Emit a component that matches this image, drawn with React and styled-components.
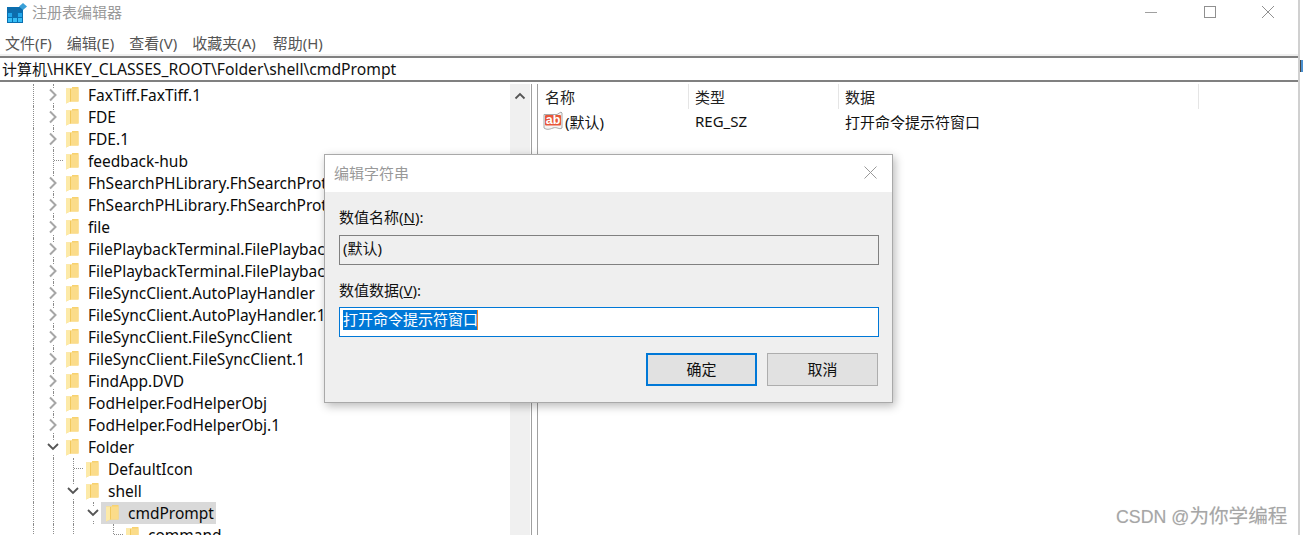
import React from "react";
import styled, { createGlobalStyle } from "styled-components";

const GlobalStyle = createGlobalStyle`
    html, body {
        margin: 0;
        padding: 0;
        background: #fff;
    }
    * {
        box-sizing: border-box;
    }
`;

const FONT = `"Noto Sans", "Noto Sans CJK SC", sans-serif`;

const Page = styled.div`
    position: relative;
    width: 1303px;
    height: 535px;
    overflow: hidden;
    background: #fff;
    display: flex;
    flex-direction: column;
    font-family: ${FONT};
    font-size: 15px;
    color: #000;
`;

const TitleBar = styled.div`
    height: 33px;
    flex: none;
    display: flex;
    align-items: flex-start;
    padding: 3px 0 0 7px;
    gap: 5px;
    color: #999;
`;

const AppName = styled.span`
    line-height: 20px;
    margin-top: -1px;
`;

const WindowButtons = styled.div`
    margin-left: auto;
    width: 157px;
    display: flex;
    justify-content: space-between;
    margin-right: 15px;
    margin-top: 2px;
`;

const MenuBar = styled.div`
    height: 21px;
    flex: none;
    display: flex;
    gap: 15px;
    padding-left: 5px;
    color: #555;
    font-size: 15px;
    line-height: 21px;
`;

const MenuItem = styled.span`
    margin-right: ${(p) => p.$extra || 0}px;
`;

const Strip = styled.div`
    height: 2px;
    flex: none;
    width: 1298px;
    background: #f0f0f0;
`;

const AddressBar = styled.div`
    height: 26px;
    width: 1298px;
    flex: none;
    border-top: 2px solid #808080;
    border-bottom: 2px solid #808080;
    padding-left: 2px;
    line-height: 22px;
    white-space: nowrap;
    color: #111;
    font-size: 15.7px;
`;

const AddressRoot = styled.span`
    font-size: 15px;
`;

const Body = styled.div`
    flex: 1;
    min-height: 0;
    width: 1298px;
    margin-top: 2px;
    display: flex;
`;

const Tree = styled.div`
    width: 510px;
    flex: none;
    overflow: hidden;
    padding-left: 23px;
`;

const Row = styled.div`
    height: 22px;
    display: flex;
    white-space: nowrap;
    color: #0a0a0a;
    font-size: 15.5px;
`;

const Indent = styled.div`
    position: relative;
    width: 20px;
    flex: none;
    ${(p) => p.$line && `
        &::before {
            content: "";
            position: absolute;
            left: 10px;
            top: 0;
            bottom: 0;
            border-left: 1px dotted #8c8c8c;
        }
    `}
    ${(p) => p.$stub && `
        &::after {
            content: "";
            position: absolute;
            left: 11px;
            right: 0;
            top: 10px;
            border-top: 1px dotted #8c8c8c;
        }
    `}
`;

const Toggle = styled.div`
    position: relative;
    width: 20px;
    flex: none;
    display: flex;
    align-items: center;
    justify-content: center;
    &::before {
        content: "";
        position: absolute;
        left: 10px;
        top: 0;
        bottom: 0;
        border-left: 1px dotted #8c8c8c;
    }
    svg {
        position: relative;
        background: #fff;
    }
`;

const Item = styled.div`
    display: flex;
    align-items: center;
    gap: 9px;
    height: 22px;
    margin-left: -2px;
    padding: 0 2px 0 5px;
    background: ${(p) => (p.$selected ? "#d9d9d9" : "transparent")};
    position: relative;
`;

const Label = styled.span`
    line-height: 22px;
`;

const Scrollbar = styled.div`
    width: 20px;
    flex: none;
    background: #f0f0f0;
    display: flex;
    justify-content: center;
    padding-top: 8px;
`;

const Divider = styled.div`
    width: 7px;
    flex: none;
    border-left: 1px solid #a0a0a0;
    border-right: 1px solid #a0a0a0;
    margin-left: 1px;
`;

const List = styled.div`
    flex: 1;
    min-width: 0;
`;

const ListHeader = styled.div`
    height: 25px;
    display: flex;
    color: #222;
`;

const HeaderCell = styled.div`
    width: ${(p) => p.$width}px;
    flex: none;
    padding-left: ${(p) => p.$pad}px;
    border-right: 1px solid #e5e5e5;
    line-height: 26px;
`;

const ListRow = styled.div`
    display: flex;
    height: 26px;
    padding-bottom: 2px;
    align-items: center;
    color: #111;
`;

const NameCell = styled.div`
    width: 151px;
    flex: none;
    display: flex;
    align-items: center;
    gap: 2px;
    padding-left: 5px;
`;

const TextCell = styled.div`
    width: 150px;
    flex: none;
    padding-left: 6px;
`;

const RightEdge = styled.div`
    position: absolute;
    left: 1298px;
    top: 0;
    bottom: 0;
    width: 2px;
    background: #d0d0d0;
`;

const EdgeMark = styled.div`
    position: absolute;
    left: 1300px;
    top: 60px;
    width: 3px;
    height: 12px;
    background: #4a90d0;
    border-left: 1px solid #444;
`;

const Dialog = styled.div`
    position: absolute;
    left: 324px;
    top: 154px;
    width: 569px;
    height: 249px;
    border: 1px solid #a9a9a9;
    background: #efefef;
    box-shadow: 2px 3px 9px rgba(0, 0, 0, 0.28);
    display: flex;
    flex-direction: column;
    color: #111;
`;

const DialogTitle = styled.div`
    height: 37px;
    flex: none;
    background: #fff;
    display: flex;
    align-items: center;
    justify-content: space-between;
    padding: 0 15px 2px 9px;
    color: #999;
`;

const DialogBody = styled.div`
    flex: 1;
    padding: 14px 13px 0 14px;
    display: flex;
    flex-direction: column;
`;

const FieldLabel = styled.div`
    height: ${(p) => (p.$compact ? 28 : 29)}px;
    line-height: 23px;
`;

const ReadOnlyField = styled.div`
    height: 30px;
    flex: none;
    border: 1px solid #808080;
    padding-left: 3px;
    line-height: 24px;
    margin-bottom: 14px;
`;

const EditField = styled.div`
    height: 30px;
    flex: none;
    border: 1px solid #0078d7;
    background: #fff;
    padding: 2px 0 0 3px;
    display: flex;
    align-items: flex-start;
`;

const Selection = styled.span`
    background: #0078d7;
    color: #fff;
    line-height: 19px;
    height: 20px;
    border-right: 1px solid #f08020;
    width: 135px;
    white-space: nowrap;
`;

const Buttons = styled.div`
    margin-top: 16px;
    display: flex;
    justify-content: flex-end;
    gap: 10px;
    padding-right: 1px;
`;

const Button = styled.div`
    width: 111px;
    height: 33px;
    background: #e1e1e1;
    border: ${(p) => (p.$primary ? "2px solid #0078d7" : "1px solid #adadad")};
    display: flex;
    align-items: center;
    justify-content: center;
    padding-bottom: 2px;
`;

const Watermark = styled.div`
    position: absolute;
    left: 1116px;
    top: 503px;
    font-family: "Liberation Sans", "Noto Sans CJK SC", sans-serif;
    font-size: 19.6px;
    line-height: 26px;
    color: #a6a6a6;
    white-space: nowrap;
    text-shadow: 0 0 1px rgba(0, 0, 0, 0.12);
`;

const WatermarkLatin = styled.span`
    font-size: 17.8px;
`;

const AppIcon = () => (
    <svg width="20" height="20" viewBox="0 0 20 20" style={{ flex: "none" }}>
        <rect x="0" y="4" width="16" height="16" fill="#0a6fb0" />
        <rect x="1" y="5" width="4" height="4" fill="#0f6cab" />
        <rect x="6" y="5" width="4" height="4" fill="#0f6cab" />
        <rect x="11" y="5" width="4" height="4" fill="#0f6cab" />
        <rect x="1" y="10" width="4" height="4" fill="#22a6ea" />
        <rect x="6" y="10" width="4" height="4" fill="#0f6cab" />
        <rect x="11" y="10" width="4" height="4" fill="#22a6ea" />
        <rect x="1" y="15" width="4" height="4" fill="#36bdf5" />
        <rect x="6" y="15" width="4" height="4" fill="#36bdf5" />
        <rect x="11" y="15" width="4" height="4" fill="#36bdf5" />
        <path d="M16 0l4 3.500-4 3.500-4-3.500z" fill="#3aa0d8" />
    </svg>
);

const WinMin = () => (
    <svg width="40" height="14" viewBox="0 0 40 14">
        <path d="M14 7.500h12" stroke="#a0a0a0" fill="none" />
    </svg>
);

const WinMax = () => (
    <svg width="40" height="14" viewBox="0 0 40 14">
        <rect x="14.500" y="1.500" width="11" height="11" stroke="#909090" fill="none" />
    </svg>
);

const WinClose = () => (
    <svg width="40" height="14" viewBox="0 0 40 14">
        <path d="M14 1l12 12M26 1L14 13" stroke="#909090" fill="none" />
    </svg>
);

const Chevron = ({ open }) => (
    <svg width="12" height="14" viewBox="0 0 12 14">
        {open ? (
            <path d="M1 4l5 5 5-5" stroke="#555" strokeWidth="1.800" fill="none" />
        ) : (
            <path d="M3 1.500L8.500 7 3 12.500" stroke="#a6a6a6" strokeWidth="2" fill="none" />
        )}
    </svg>
);

const Folder = () => (
    <svg width="13" height="18" viewBox="0 0 13 18" style={{ flex: "none" }}>
        <path d="M0 2.500h6v-1.500h6.500v14.500h-8.500l-4 2z" fill="#f8d26f" />
        <path d="M4 2.500h8.500v13h-8.500z" fill="#fbdc8a" />
        <path d="M0 2.500h4v13l-4 2z" fill="#fdeaa8" />
        <path d="M4.500 3v12.500" stroke="#f2c95e" fill="none" />
    </svg>
);

const AbIcon = () => (
    <svg width="20" height="20" viewBox="0 0 20 20" style={{ flex: "none" }}>
        <path d="M1 3.500h13l4 -2.500 1 1v15c-3 2-5-1.500-9 0s-6 2-9 0z" fill="#f4f4f4" stroke="#a8a8a8" />
        <rect x="2" y="4" width="16" height="10.500" rx="1" fill="#e8573a" />
        <text x="10" y="13" textAnchor="middle" fontFamily="Liberation Sans, sans-serif" fontWeight="700" fontSize="12.5" fill="#fff">ab</text>
    </svg>
);

const CloseGlyph = () => (
    <svg width="13" height="13" viewBox="0 0 13 13">
        <path d="M.500.500l12 12M12.500.500l-12 12" stroke="#999" fill="none" />
    </svg>
);

const UpArrow = () => (
    <svg width="12" height="8" viewBox="0 0 12 8">
        <path d="M1.500 6.500L6 2l4.500 4.500" stroke="#555" strokeWidth="1.800" fill="none" />
    </svg>
);

const menus = [
    { label: "文件(F)" },
    { label: "编辑(E)" },
    { label: "查看(V)" },
    { label: "收藏夹(A)", extra: 2 },
    { label: "帮助(H)" },
];

// guides: which of the indent columns carry a dotted line
const rows = [
    { name: "FaxTiff.FaxTiff.1", guides: [1], kind: "closed" },
    { name: "FDE", guides: [1], kind: "closed" },
    { name: "FDE.1", guides: [1], kind: "closed" },
    { name: "feedback-hub", guides: [1], kind: "leaf" },
    { name: "FhSearchPHLibrary.FhSearchProt", guides: [1], kind: "closed" },
    { name: "FhSearchPHLibrary.FhSearchProt", guides: [1], kind: "closed" },
    { name: "file", guides: [1], kind: "closed" },
    { name: "FilePlaybackTerminal.FilePlayback", guides: [1], kind: "closed" },
    { name: "FilePlaybackTerminal.FilePlayback", guides: [1], kind: "closed" },
    { name: "FileSyncClient.AutoPlayHandler", guides: [1], kind: "closed" },
    { name: "FileSyncClient.AutoPlayHandler.1", guides: [1], kind: "closed" },
    { name: "FileSyncClient.FileSyncClient", guides: [1], kind: "closed" },
    { name: "FileSyncClient.FileSyncClient.1", guides: [1], kind: "closed" },
    { name: "FindApp.DVD", guides: [1], kind: "closed" },
    { name: "FodHelper.FodHelperObj", guides: [1], kind: "closed" },
    { name: "FodHelper.FodHelperObj.1", guides: [1], kind: "closed" },
    { name: "Folder", guides: [1], kind: "open" },
    { name: "DefaultIcon", guides: [1, 1], kind: "leaf" },
    { name: "shell", guides: [1, 1], kind: "open" },
    { name: "cmdPrompt", guides: [1, 1, 1], kind: "open", selected: true },
    { name: "command", guides: [1, 1, 1, 0], kind: "leaf" },
];

const TreeRow = ({ row }) => (
    <Row>
        {row.guides.map((g, i) => (
            <Indent key={i} $line={g === 1} />
        ))}
        {row.kind === "leaf" ? (
            <Indent $line $stub />
        ) : (
            <Toggle>
                <Chevron open={row.kind === "open"} />
            </Toggle>
        )}
        <Item $selected={row.selected}>
            <Folder />
            <Label>{row.name}</Label>
        </Item>
    </Row>
);

const App = () => {
    return (
        <Page>
            <GlobalStyle />
            <TitleBar>
                <AppIcon />
                <AppName>注册表编辑器</AppName>
                <WindowButtons>
                    <WinMin />
                    <WinMax />
                    <WinClose />
                </WindowButtons>
            </TitleBar>
            <MenuBar>
                {menus.map((m) => (
                    <MenuItem key={m.label} $extra={m.extra}>{m.label}</MenuItem>
                ))}
            </MenuBar>
            <Strip />
            <AddressBar>
                <AddressRoot>计算机</AddressRoot>\HKEY_CLASSES_ROOT\Folder\shell\cmdPrompt
            </AddressBar>
            <Body>
                <Tree>
                    {rows.map((r, i) => (
                        <TreeRow key={i} row={r} />
                    ))}
                </Tree>
                <Scrollbar>
                    <UpArrow />
                </Scrollbar>
                <Divider />
                <List>
                    <ListHeader>
                        <HeaderCell $width={151} $pad={7}>名称</HeaderCell>
                        <HeaderCell $width={150} $pad={6}>类型</HeaderCell>
                        <HeaderCell $width={360} $pad={6}>数据</HeaderCell>
                    </ListHeader>
                    <ListRow>
                        <NameCell>
                            <AbIcon />
                            <span>(默认)</span>
                        </NameCell>
                        <TextCell>REG_SZ</TextCell>
                        <TextCell>打开命令提示符窗口</TextCell>
                    </ListRow>
                </List>
            </Body>
            <RightEdge />
            <EdgeMark />
            <Dialog>
                <DialogTitle>
                    <span>编辑字符串</span>
                    <CloseGlyph />
                </DialogTitle>
                <DialogBody>
                    <FieldLabel>数值名称(<u>N</u>):</FieldLabel>
                    <ReadOnlyField>(默认)</ReadOnlyField>
                    <FieldLabel $compact>数值数据(<u>V</u>):</FieldLabel>
                    <EditField>
                        <Selection>打开命令提示符窗口</Selection>
                    </EditField>
                    <Buttons>
                        <Button $primary>确定</Button>
                        <Button>取消</Button>
                    </Buttons>
                </DialogBody>
            </Dialog>
            <Watermark>
                <WatermarkLatin>CSDN @</WatermarkLatin>为你学编程
            </Watermark>
        </Page>
    );
};

export default App;
